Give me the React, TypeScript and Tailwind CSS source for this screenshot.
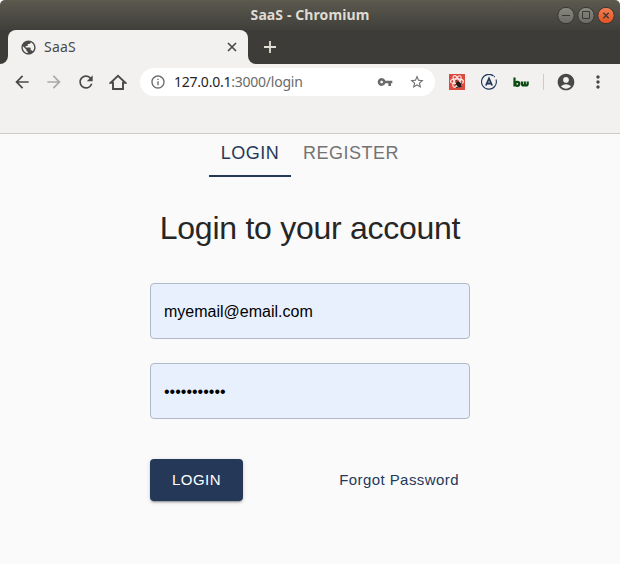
import React from "react";
import {
  MdArrowBack,
  MdArrowForward,
  MdRefresh,
  MdInfoOutline,
  MdVpnKey,
  MdStarBorder,
  MdAccountCircle,
  MdMoreVert,
  MdPublic,
} from "react-icons/md";

function WindowButtons() {
  return (
    <svg className="h-[20px] w-[60px]" viewBox="0 0 60 20">
      <defs>
        <linearGradient id="grey" x1="0" y1="0" x2="0" y2="1">
          <stop offset="0" stopColor="#8a8981" />
          <stop offset="1" stopColor="#6a6962" />
        </linearGradient>
        <linearGradient id="orange" x1="0" y1="0" x2="0" y2="1">
          <stop offset="0" stopColor="#f37f55" />
          <stop offset="1" stopColor="#e2511f" />
        </linearGradient>
      </defs>
      <g stroke="#35342f">
        <circle cx="10" cy="9.500" r="8.200" fill="url(#grey)" />
        <circle cx="30" cy="9.500" r="8.200" fill="url(#grey)" />
        <circle cx="50" cy="9.500" r="8.200" fill="url(#orange)" />
      </g>
      <g stroke="#3b3a35" fill="none">
        <path d="M6 9.500h8" />
        <path d="M26.500 5.500h7v7h-7z" />
        <path d="M47.300 6.800l5.400 5.400M52.700 6.800l-5.400 5.400" strokeWidth="1.300" />
      </g>
    </svg>
  );
}

function HomeIcon() {
  return (
    <svg className="h-[18px] w-[18px]" viewBox="0 0 18 18" fill="none" stroke="#494949" strokeWidth="1.900">
      <path d="M1.600 9.800H4v6.200h10V9.800h2.400L9 2.900z" />
    </svg>
  );
}

function CloseIcon() {
  return (
    <svg className="ml-auto size-[14px]" viewBox="0 0 14 14" stroke="#4a4a4a" strokeWidth="1.700">
      <path d="M3 3l8 8M11 3l-8 8" />
    </svg>
  );
}

function PlusIcon() {
  return (
    <svg className="mt-[7px] ml-[4px] size-5" viewBox="0 0 20 20" stroke="#e3dfd5" strokeWidth="1.800">
      <path d="M10 4v12M4 10h12" />
    </svg>
  );
}

function ReactExtension() {
  return (
    <svg className="h-4 w-4" viewBox="0 0 16 16">
      <path fill="#db4a3c" d="M0 0h16v16H0z" />
      <g fill="none" stroke="#fbe9e5" strokeWidth="1.100">
        <ellipse cx="8" cy="7.500" rx="6.500" ry="2.600" />
        <ellipse cx="8" cy="7.500" rx="6.500" ry="2.600" transform="rotate(60 8 7.500)" />
        <ellipse cx="8" cy="7.500" rx="6.500" ry="2.600" transform="rotate(120 8 7.500)" />
      </g>
      <ellipse cx="9.800" cy="10.500" rx="2.300" ry="3.300" fill="#251b1a" transform="rotate(-35 9.800 10.500)" />
      <path d="M6 10.500l7-1M7 13.500l5.500-1M8 7.500l-1-1.500" stroke="#251b1a" strokeWidth=".8" />
    </svg>
  );
}

function ApolloExtension() {
  return (
    <svg className="h-4 w-4" viewBox="0 0 16 16" fill="none" stroke="#22395b">
      <path d="M12.600 2A7.400 7.400 0 1 0 15 5.500" strokeWidth="1.100" />
      <circle cx="13.500" cy="2.700" r=".6" fill="#22395b" stroke="none" />
      <path d="M4.900 11.500L8 4.500l3.100 7M6.200 9.500h3.700" strokeWidth="1.800" />
    </svg>
  );
}

function BwExtension() {
  return (
    <svg className="h-4 w-4" viewBox="0 0 16 16" fill="none" stroke="#0b4b10" strokeWidth="2.200">
      <path d="M1.500 3.500v9" />
      <circle cx="4.300" cy="9.800" r="2" />
      <path d="M8.900 7.500v2.200c0 2.300 2.900 2.300 2.900 0V7.500v2.200c0 2.300 2.900 2.300 2.900 0V7.500" />
    </svg>
  );
}

function TabCurve({ flip = false }: { flip?: boolean }) {
  return (
    <svg className={flip ? "h-2 w-2 self-end -scale-x-100" : "h-2 w-2 self-end"} viewBox="0 0 8 8">
      <path d="M8 0v8H0a8 8 0 0 0 8-8z" fill="#f2f1f0" />
    </svg>
  );
}

function Browser() {
  return (
    <header className="font-['Noto_Sans',sans-serif]">
      <div className="bg-white">
        <div className="grid h-[30px] grid-cols-[64px_1fr_64px] items-center rounded-t-[5px] border-t border-[#5d5b4e] bg-linear-to-b from-[#5b594e] to-[#403f3a]">
          <span />
          <h1 className="pb-[2px] text-center text-[14px] leading-5 font-bold tracking-[0.100px] text-[#dfdbd2]">
            SaaS - Chromium
          </h1>
          <WindowButtons />
        </div>
      </div>
      <div className="flex h-[34px] bg-[#3d3c38]">
        <TabCurve />
        <div className="flex w-[240px] items-center rounded-t-[8px] bg-[#f2f1f0] pr-[9px] pl-3 text-[#4a4a4a]">
          <MdPublic className="size-[17px]" />
          <span className="ml-[7px] text-[14px] leading-5 tracking-[0.200px]">SaaS</span>
          <CloseIcon />
        </div>
        <TabCurve flip />
        <PlusIcon />
      </div>
      <div className="h-[70px] border-b border-[#cccbc9] bg-[#f2f1f0] pt-1">
        <div className="flex h-7 items-center text-[#494949]">
          <div className="flex w-[140px] items-center gap-3 pl-3">
            <MdArrowBack className="size-5" />
            <MdArrowForward className="size-5 text-[#a9a9a8]" />
            <MdRefresh className="size-5" />
            <span className="pl-px">
              <HomeIcon />
            </span>
          </div>
          <div className="flex h-7 w-[295px] items-center rounded-full bg-white px-[10px] text-[#6b6b6b]">
            <MdInfoOutline className="size-4" />
            <span className="ml-2 text-[14px] leading-5 tracking-[-0.230px]">
              <span className="text-[#252525]">127.0.0.1</span>:3000/login
            </span>
            <MdVpnKey className="ml-auto size-4" />
            <MdStarBorder className="ml-4 size-4" />
          </div>
          <div className="ml-[14px] flex items-center gap-4">
            <ReactExtension />
            <ApolloExtension />
            <BwExtension />
          </div>
          <span className="ml-[14px] h-4 w-px bg-[#cccbc9]" />
          <MdAccountCircle className="ml-3 size-5" />
          <MdMoreVert className="ml-3 size-5" />
        </div>
      </div>
    </header>
  );
}

export default function App() {
  return (
    <div className="h-[564px] w-[620px] overflow-hidden bg-[#fafafa] font-['Liberation_Sans',Arial,sans-serif]">
      <Browser />
      <main className="mx-auto w-[320px]">
        <nav className="ml-[59px] flex h-[43px] text-[18px] leading-[38px] tracking-[0.510px]">
          <a className="w-[82px] border-b-2 border-[#253858] text-center text-[#253858]">LOGIN</a>
          <a className="ml-3 text-[#737373]">REGISTER</a>
        </nav>
        <h2 className="mt-[31px] text-center text-[32px] leading-10 tracking-[-0.267px] text-[#262626]">
          Login to your account
        </h2>
        <form className="mt-[35px]">
          <input
            className="block h-14 w-full rounded-[4px] border border-[#b1b8ca] bg-[#e8f0fe] px-[13px] pt-[2px] text-[16px] text-black"
            defaultValue="myemail@email.com"
          />
          <input
            type="password"
            className="mt-6 block h-14 w-full rounded-[4px] border border-[#b1b8ca] bg-[#e8f0fe] px-[13px] pt-[2px] text-[16px] text-black"
            defaultValue="mypassword1"
          />
          <div className="mt-10 flex items-center justify-between text-[15px] tracking-[0.430px]">
            <button
              type="button"
              className="h-[42px] w-[93px] rounded-[4px] bg-[#253858] text-white shadow-[0_3px_1px_-2px_rgba(0,0,0,0.2),0_2px_2px_0_rgba(0,0,0,0.14),0_1px_5px_0_rgba(0,0,0,0.12)]"
            >
              LOGIN
            </button>
            <a className="pr-[11px] text-[#253858]">Forgot Password</a>
          </div>
        </form>
      </main>
    </div>
  );
}
